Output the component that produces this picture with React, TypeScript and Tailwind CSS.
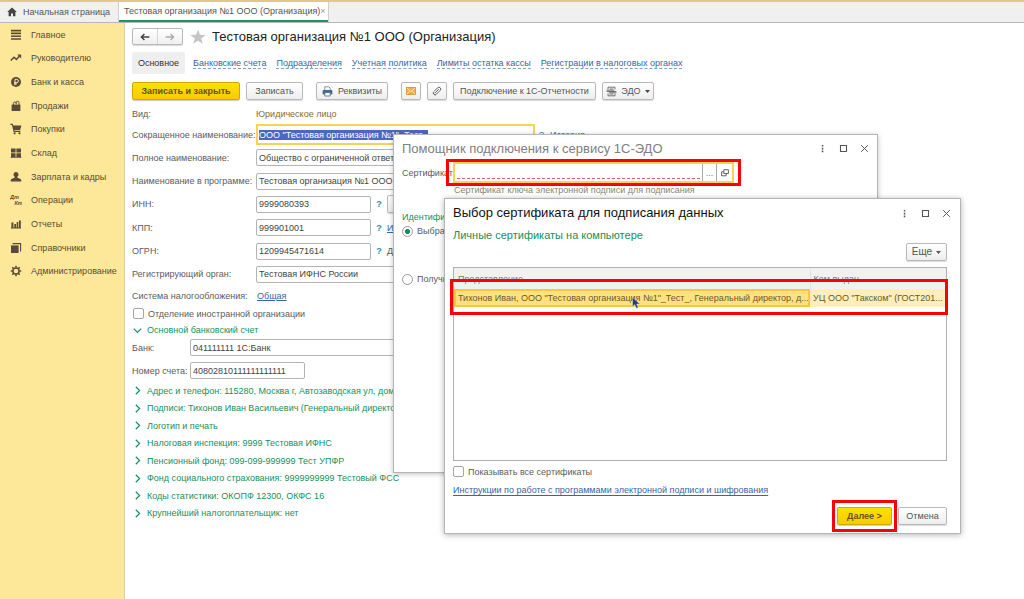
import React, { useEffect, useRef } from "react";

const menu = [
  ["Главное", "main"],
  ["Руководителю", "trend"],
  ["Банк и касса", "ruble"],
  ["Продажи", "bag"],
  ["Покупки", "cart"],
  ["Склад", "store"],
  ["Зарплата и кадры", "person"],
  ["Операции", "dtkt"],
  ["Отчеты", "bars"],
  ["Справочники", "books"],
  ["Администрирование", "gear"],
];

const tabs = [
  "Банковские счета",
  "Подразделения",
  "Учетная политика",
  "Лимиты остатка кассы",
  "Регистрации в налоговых органах",
];

const sections = [
  "Адрес и телефон: 115280, Москва г, Автозаводская ул, дом",
  "Подписи: Тихонов Иван Васильевич (Генеральный директор)",
  "Логотип и печать",
  "Налоговая инспекция: 9999 Тестовая ИФНС",
  "Пенсионный фонд: 099-099-999999 Тест УПФР",
  "Фонд социального страхования: 9999999999 Тестовый ФСС",
  "Коды статистики: ОКОПФ 12300, ОКФС 16",
  "Крупнейший налогоплательщик: нет",
];

const buttonLook =
  "flex h-[18px] items-center justify-center rounded-[2px] border border-[#b9b9b9] bg-linear-to-b from-white to-[#eeeeee] text-[#555] shadow-[0_1px_1px_rgba(0,0,0,0.15)]";
const yellowLook =
  "flex h-[18px] items-center justify-center rounded-[2px] border border-[#d0a800] bg-linear-to-b from-[#ffe000] to-[#f7cb00] font-bold text-[#65541a] shadow-[0_1px_1px_rgba(0,0,0,0.2)]";
const inputLook =
  "h-[17px] rounded-[2px] border border-[#b4b4b4] bg-white px-[2px] text-[#444] outline-none";

function MenuIcon({ name }: { name: string }) {
  const c = "#5b4a3c";
  return (
    <svg viewBox="0 0 12 12" className="size-3 shrink-0" fill={c} stroke="none" aria-hidden="true">
      {name === "main" && <path d="M1 .8h10v1.6H1zM1 3.6h10v1.6H1zM1 6.4h10V8H1zM1 9.2h10v1.6H1z" />}
      {name === "trend" && (
        <>
          <path d="M.8 8.6 4 5.2 6.4 7.4 10 3.6" fill="none" stroke={c} strokeWidth="1.5" />
          <path d="M7.2 2.4h4v4z" />
        </>
      )}
      {name === "ruble" && (
        <>
          <circle cx="6" cy="6" r="5" />
          <path d="M5 9.2V3.4h1.8a1.5 1.5 0 0 1 0 3.2H4M4 7.9h3" fill="none" stroke="#fde799" strokeWidth="1" />
        </>
      )}
      {name === "bag" && (
        <>
          <path d="M1.6 4.6h8.8V11H1.6z" />
          <path d="M3.4 6V3.4M6.2 4.4V2.6a1.4 1.4 0 0 1 2.8 0V6M3.4 3.4a1.4 1.4 0 0 1 2.8 0" fill="none" stroke={c} strokeWidth="1" />
        </>
      )}
      {name === "cart" && (
        <>
          <path d="M2.6 2.6H11.4L10.2 7H3.8z" />
          <path d="M.4 1.4h2L4 8.4h6.4" fill="none" stroke={c} strokeWidth="1.1" />
          <circle cx="4.6" cy="10.3" r="1.1" />
          <circle cx="9.4" cy="10.3" r="1.1" />
        </>
      )}
      {name === "store" && <path d="M1 1.6h4.6v3.9H1zM6.4 1.6H11v3.9H6.4zM1 6.3h4.6v3.6H1zM6.4 6.3H11v3.6H6.4zM.6 10.2h10.8v.8H.6z" />}
      {name === "person" && <path d="M6 1a2.4 2.6 0 0 1 1.4 4.8v.9l3.2 1.2q.8.5.8 2.6H.6q0-2.1.8-2.6l3.2-1.2v-.9A2.4 2.6 0 0 1 6 1z" />}
      {name === "dtkt" && (
        <g fontFamily="Liberation Sans, sans-serif" fontSize="5.5" fontWeight="700" fontStyle="italic">
          <text x="0" y="5">Дт</text>
          <text x="4.4" y="11">Кт</text>
        </g>
      )}
      {name === "bars" && <path d="M1.4 4.4h2v5h-2zM4.3 6h1.8v3.4H4.3zM6.7 4h1.6v5.4H6.7zM9 2.4h1.8v7H9zM1 9.6h10v1H1z" />}
      {name === "books" && (
        <>
          <path d="M1 3.4h7.6V11H1z" />
          <path d="M2.6 1.6h8v8" fill="none" stroke={c} strokeWidth="1.1" />
        </>
      )}
      {name === "gear" && (
        <>
          <circle cx="6" cy="6" r="3.1" fill="none" stroke={c} strokeWidth="1.5" />
          <path
            d="M6 .8v2M6 9.2v2M.8 6h2M9.2 6h2M2.3 2.3l1.4 1.4M8.3 8.3l1.4 1.4M2.3 9.7l1.4-1.4M8.3 3.7l1.4-1.4"
            stroke={c}
            strokeWidth="1.5"
          />
        </>
      )}
    </svg>
  );
}

function WindowControls() {
  return (
    <div className="flex items-center gap-3 text-[#555]">
      <button type="button" aria-label="Меню окна" className="grid size-[9px] place-items-center">
        <svg viewBox="0 0 9 9" className="size-[9px]" fill="currentColor">
          <path d="M3.8 1h1.5v1.6H3.8zM3.8 3.8h1.5v1.6H3.8zM3.8 6.6h1.5v1.6H3.8z" />
        </svg>
      </button>
      <button type="button" aria-label="Развернуть" className="grid size-[9px] place-items-center">
        <svg viewBox="0 0 9 9" className="size-[9px]" fill="none" stroke="currentColor">
          <path d="M1.5 1.5h6v6h-6z" strokeWidth="1.1" />
        </svg>
      </button>
      <button type="button" aria-label="Закрыть" className="grid size-[9px] place-items-center">
        <svg viewBox="0 0 9 9" className="size-[9px]" fill="none" stroke="currentColor">
          <path d="M1.2 1.2l6.6 6.6M7.8 1.2 1.2 7.8" strokeWidth="1" />
        </svg>
      </button>
    </div>
  );
}

function Chevron({ open = false }: { open?: boolean }) {
  return (
    <svg viewBox="0 0 9 9" className="size-[9px] shrink-0" fill="none" stroke="#16905a" strokeWidth="1.2" aria-hidden="true">
      <path d={open ? "M.8 2.6 4.5 6.4 8.2 2.6" : "M2.8.8 6.6 4.5 2.8 8.2"} />
    </svg>
  );
}

function Row({ id, label, children }: { id: string; label: string; children: React.ReactNode }) {
  return (
    <div className="flex items-center">
      <label htmlFor={id} className="w-[124px] shrink-0 whitespace-nowrap">
        {label}
      </label>
      {children}
    </div>
  );
}

function TopTabs() {
  return (
    <nav className="flex h-[23px] shrink-0 border-t-2 border-b border-t-[#dfc88c] border-b-[#b8b8b8] bg-[#f1f0f1] text-[#555]">
      <button type="button" className="flex w-[119px] items-center gap-[6px] border-r border-[#cfcfcf] pl-[7px] whitespace-nowrap">
        <svg viewBox="0 0 10 10" className="size-[10px]" fill="#444" aria-hidden="true">
          <path d="M5 .6 9.8 5H8.4v4.2H6V6.4H4v2.8H1.6V5H.2z" />
        </svg>
        Начальная страница
      </button>
      <button type="button" className="flex w-[209px] items-center justify-between border-b-2 border-[#1d9463] bg-white pr-1 pl-[5px] whitespace-nowrap">
        Тестовая организация №1 ООО (Организация)
        <span className="text-[#999]">×</span>
      </button>
      <div className="border-l border-[#cfcfcf]" />
    </nav>
  );
}

function Sidebar() {
  return (
    <aside className="w-[125px] shrink-0 border-r border-[#d8cda8] bg-[#fde799] text-[#5a4c36]">
      <nav className="grid h-[260px] auto-rows-fr">
        {menu.map(([label, icon]) => (
          <a key={label} href="#" className="flex items-center gap-[9px] pl-[10px] whitespace-nowrap">
            <MenuIcon name={icon} />
            {label}
          </a>
        ))}
      </nav>
    </aside>
  );
}

function Toolbar() {
  return (
    <div className="mt-2 flex items-center whitespace-nowrap">
      <button type="button" className={`${yellowLook} w-[108px]`}>Записать и закрыть</button>
      <button type="button" className={`${buttonLook} ml-[6px] w-[57px]`}>Записать</button>
      <button type="button" className={`${buttonLook} ml-[13px] w-[72px] gap-[5px]`}>
        <svg viewBox="0 0 11 11" className="size-[11px]" aria-hidden="true">
          <path d="M2.8.8h4l1.4 1.4V5H2.8z" fill="#fff" stroke="#5a7896" strokeWidth=".8" />
          <rect x=".6" y="4" width="9.8" height="4.4" rx="1" fill="#426a90" />
          <path d="M2.8 6.6h5.4V10H2.8z" fill="#fff" stroke="#426a90" strokeWidth=".8" />
        </svg>
        Реквизиты
      </button>
      <button type="button" aria-label="Письмо" className={`${buttonLook} ml-[13px] w-[20px]`}>
        <svg viewBox="0 0 10 8" className="h-2 w-[10px]">
          <rect x=".5" y=".5" width="9" height="7" fill="#f5ae47" stroke="#dc8c27" strokeWidth=".8" />
          <path d="M.8.9 5 4.6 9.2.9M.8 7.2l3-3.2M9.2 7.2l-3-3.2" fill="none" stroke="#fff0cf" strokeWidth=".8" />
        </svg>
      </button>
      <button type="button" aria-label="Файлы" className={`${buttonLook} ml-[6px] w-[20px]`}>
        <svg viewBox="0 0 10 10" className="size-[10px]" fill="none" stroke="#666" strokeWidth="1">
          <path d="M3.2 6.8 6.8 3.2M2 5.4 5.600 1.8a1.8 1.8 0 0 1 2.6 2.6L4.4 8.2a1.4 1.4 0 0 1-2.4-2M3.8 8.8a2 2 0 0 1-2.4-2.6" />
        </svg>
      </button>
      <button type="button" className={`${buttonLook} ml-[6px] w-[143px]`}>Подключение к 1С-Отчетности</button>
      <button type="button" className={`${buttonLook} ml-[6px] w-[52px] gap-1`}>
        <svg viewBox="0 0 11 11" className="size-[11px]" fill="none" stroke="#666" strokeWidth=".9" aria-hidden="true">
          <path d="M2 3.400V1.200h7v2.200M2 7.600v2.200h7V7.600M3.600 3h3.800M3.600 8h3.800M.6 5.500h8M10.400 5.500h-8M.6 4.200h7.600M2.800 6.800h7.600" />
        </svg>
        ЭДО
        <svg viewBox="0 0 5 3" className="h-[3px] w-[5px]" fill="#444" aria-hidden="true"><path d="M0 0h5L2.5 3z" /></svg>
      </button>
    </div>
  );
}

function OrganizationForm() {
  const shortName = useRef<HTMLInputElement>(null);
  useEffect(() => {
    shortName.current?.focus();
    shortName.current?.select();
  }, []);

  return (
    <main className="min-w-0 flex-1 overflow-hidden pl-[7px]">
      <header className="mt-1 flex h-[19px] items-center">
        <div className="flex h-[17px] w-[51px] rounded-[2px] border border-[#b9b9b9] bg-linear-to-b from-white to-[#f0f0f0] shadow-[0_1px_1px_rgba(0,0,0,0.15)]">
          <button type="button" aria-label="Назад" className="grid flex-1 place-items-center border-r border-[#d5d5d5]">
            <svg viewBox="0 0 10 8" className="h-2 w-[10px]" fill="none" stroke="#444" strokeWidth="1.5"><path d="M9.4 4H1.4M4.4 1 1.4 4l3 3" /></svg>
          </button>
          <button type="button" aria-label="Вперед" className="grid flex-1 place-items-center">
            <svg viewBox="0 0 10 8" className="h-2 w-[10px]" fill="none" stroke="#aaa" strokeWidth="1.3"><path d="M.6 4h8M5.6 1l3 3-3 3" /></svg>
          </button>
        </div>
        <svg viewBox="0 0 16 16" className="ml-[7px] size-4" fill="#c5c5c5" aria-hidden="true">
          <path d="M8 .6l2 5.1 5.6.3-4.4 3.4 1.6 5.4L8 11.8l-4.8 3 1.6-5.4L.4 6 6 5.7z" />
        </svg>
        <h1 className="ml-[6px] text-[13px] whitespace-nowrap text-[#222]">Тестовая организация №1 ООО (Организация)</h1>
      </header>

      <nav className="mt-[6px] flex h-[22px] items-center gap-2 whitespace-nowrap">
        <a href="#" className="flex h-full w-[53px] items-center justify-center rounded-[2px] bg-[#efefef] text-[#333]">Основное</a>
        <div className="flex gap-[10px]">
          {tabs.map((tab) => (
            <a key={tab} href="#" className="border-b border-dashed border-[#7ba0cf] leading-[10px] text-[#3566a8]">{tab}</a>
          ))}
        </div>
      </nav>

      <Toolbar />

      <div className="mt-1 flex h-[19px] items-center">
        <span className="w-[124px]">Вид:</span>
        <span className="text-[#8a6a30]">Юридическое лицо</span>
      </div>
      <div className="grid h-[163px] auto-rows-fr">
        <Row id="short-name" label="Сокращенное наименование:">
          <input
            id="short-name"
            ref={shortName}
            defaultValue={'ООО "Тестовая организация №1"_Тест_'}
            className="h-[21px] w-[279px] border-2 border-[#f8d254] bg-white px-px outline-none selection:bg-[#4e66c2] selection:text-white"
          />
          <span className="ml-1 text-[#2b7cb4]">?</span>
          <a href="#" className="ml-[6px] text-[#3566a8] underline">История</a>
        </Row>
        <Row id="full-name" label="Полное наименование:">
          <input id="full-name" defaultValue="Общество с ограниченной ответственностью" className={`${inputLook} w-[279px]`} />
        </Row>
        <Row id="program-name" label="Наименование в программе:">
          <input id="program-name" defaultValue="Тестовая организация №1 ООО" className={`${inputLook} w-[279px]`} />
        </Row>
        <Row id="inn" label="ИНН:">
          <input id="inn" defaultValue="9999080393" className={`${inputLook} w-[115px]`} />
          <span className="w-4 text-center font-bold text-[#2b8cb4]">?</span>
          <button type="button" aria-label="Заполнить" className={`${buttonLook} w-[60px]`} />
        </Row>
        <Row id="kpp" label="КПП:">
          <input id="kpp" defaultValue="999901001" className={`${inputLook} w-[115px]`} />
          <span className="w-4 text-center font-bold text-[#2b8cb4]">?</span>
          <a href="#" className="text-[#3566a8] underline">История</a>
        </Row>
        <Row id="ogrn" label="ОГРН:">
          <input id="ogrn" defaultValue="1209945471614" className={`${inputLook} w-[115px]`} />
          <span className="w-4 text-center font-bold text-[#2b8cb4]">?</span>
          <span>Дата</span>
        </Row>
        <Row id="authority" label="Регистрирующий орган:">
          <input id="authority" defaultValue="Тестовая ИФНС России" className={`${inputLook} w-[279px]`} />
        </Row>
      </div>
      <div className="flex h-[19px] items-center">
        <span className="w-[125px]">Система налогообложения:</span>
        <a href="#" className="text-[#3566a8] underline">Общая</a>
      </div>
      <label className="flex h-[17px] items-center gap-1 pl-px">
        <input type="checkbox" className="size-[11px] appearance-none rounded-[2px] border border-[#a5a5a5] bg-white" />
        Отделение иностранной организации
      </label>
      <button type="button" className="flex h-4 items-center gap-[5px] pl-px text-[#16905a]">
        <Chevron open />
        Основной банковский счет
      </button>
      <div className="flex h-[19px] items-center">
        <label htmlFor="bank" className="w-[58px]">Банк:</label>
        <input id="bank" defaultValue="041111111 1С:Банк" className={`${inputLook} w-[345px]`} />
      </div>
      <div className="mt-1 flex h-[19px] items-center">
        <label htmlFor="account" className="w-[58px] whitespace-nowrap">Номер счета:</label>
        <input id="account" defaultValue="40802810111111111111" className={`${inputLook} w-[115px]`} />
      </div>
      <div className="mt-[2px] grid h-[140px] auto-rows-fr pl-px">
        {sections.map((section) => (
          <button key={section} type="button" className="flex items-center gap-[5px] whitespace-nowrap text-[#16905a]">
            <Chevron />
            {section}
          </button>
        ))}
      </div>
    </main>
  );
}

function EdoAssistant() {
  return (
    <section className="absolute top-[134px] left-[393px] h-[339px] w-[485px] border border-[#b5b5b5] bg-white px-2 shadow-[0_1px_5px_rgba(0,0,0,0.25)]">
      <header className="flex h-[27px] items-center justify-between">
        <h2 className="text-[13px] text-[#808080]">Помощник подключения к сервису 1С-ЭДО</h2>
        <WindowControls />
      </header>
      <div className="flex h-[21px] items-center">
        <label htmlFor="certificate" className="w-[51px] whitespace-nowrap">Сертификат:</label>
        <div className="relative flex h-[21px] w-[281px] border-2 border-[#f8d254] bg-white">
          <div className="flex flex-1 border-r border-[#aaa] px-[2px] pb-[2px]">
            <input id="certificate" className="w-full border-b border-dashed border-[#d06070] outline-none" />
          </div>
          <button type="button" aria-label="Выбрать" className="w-[14px] border-r border-[#aaa] text-[#777]">...</button>
          <button type="button" aria-label="Открыть" className="grid w-[15px] place-items-center">
            <svg viewBox="0 0 8 8" className="size-2" fill="none" stroke="#555" strokeWidth=".9"><path d="M2.8.7h4.6v3.8H2.8zM2.600 2.800H.6v4h4.600V4.800" /></svg>
          </button>
          <div className="pointer-events-none absolute -inset-x-[9px] -inset-y-[5px] border-3 border-[#fb0007]" />
        </div>
      </div>
      <p className="mt-[2px] pl-[52px] leading-[11px] text-[#8b8375]">Сертификат ключа электронной подписи для подписания</p>
      <fieldset className="mt-[15px]">
        <legend className="h-3 text-[#16905a]">Идентификация</legend>
        <label className="flex h-4 items-center gap-[4px]">
          <input type="radio" name="identifier" defaultChecked className="size-[11px] appearance-none rounded-full border border-[#999] bg-radial from-[#16905a] from-35% to-white to-40%" />
          Выбрать
        </label>
        <label className="mt-8 flex h-4 items-center gap-[4px]">
          <input type="radio" name="identifier" className="size-[11px] appearance-none rounded-full border border-[#999] bg-white" />
          Получить
        </label>
      </fieldset>
    </section>
  );
}

function CertificateDialog() {
  return (
    <section role="dialog" aria-label="Выбор сертификата для подписания данных" className="absolute top-[198px] left-[444px] w-[517px] border border-[#b5b5b5] bg-white pr-[13px] pb-2 pl-2 shadow-[0_1px_6px_rgba(0,0,0,0.3)]">
      <header className="-mr-1 flex h-7 items-center justify-between">
        <h2 className="text-[13px] text-[#111]">Выбор сертификата для подписания данных</h2>
        <WindowControls />
      </header>
      <h3 className="h-4 text-[11px] leading-4 text-[#16905a]">Личные сертификаты на компьютере</h3>
      <div className="flex justify-end">
        <button type="button" className={`${buttonLook} w-[41px] gap-1 text-[10px]`}>
          Еще
          <svg viewBox="0 0 5 3" className="h-[3px] w-[5px]" fill="#555" aria-hidden="true"><path d="M0 0h5L2.5 3z" /></svg>
        </button>
      </div>
      <div className="relative mt-[6px] h-[194px] border border-[#b0b0b0]">
        <table className="w-full table-fixed border-collapse text-left whitespace-nowrap">
          <thead>
            <tr className="h-[21px] bg-[#f1f1f1] text-[#777]">
              <th className="w-[356px] border-r border-[#e2e2e2] pl-1 font-normal">Представление</th>
              <th className="pl-[3px] font-normal">Кем выдан</th>
            </tr>
          </thead>
          <tbody>
            <tr className="h-[18px] text-[#6b5a2c]">
              <td className="bg-[#ffe181] pl-1 outline-2 -outline-offset-2 outline-[#f5c842]">
                Тихонов Иван, ООО "Тестовая организация №1"_Тест_, Генеральный директор, д...
              </td>
              <td className="bg-[#fdeebb] pl-[3px]">УЦ ООО "Такском" (ГОСТ201...</td>
            </tr>
          </tbody>
        </table>
        <div className="pointer-events-none absolute top-[11px] -right-[2px] -left-1 h-9 border-3 border-[#fb0007]" />
        <svg viewBox="0 0 9 12" className="absolute top-[29px] left-[178px] h-3 w-[9px]" aria-hidden="true">
          <path d="M.6.6v9l2.2-2 1.6 3.6 1.8-.8-1.600-3.500h3.200z" fill="#1d3f7c" stroke="#dfe6f2" strokeWidth=".4" />
        </svg>
      </div>
      <label className="mt-[3px] flex h-[15px] items-center gap-1">
        <input type="checkbox" className="size-[11px] appearance-none rounded-[2px] border border-[#a5a5a5] bg-white" />
        Показывать все сертификаты
      </label>
      <a href="#" className="mt-1 block h-[14px] w-max leading-[14px] text-[#3566a8] underline underline-offset-2">
        Инструкции по работе с программами электронной подписи и шифрования
      </a>
      <footer className="mt-[10px] flex justify-end gap-[6px]">
        <div className="relative">
          <button type="button" className={`${yellowLook} w-[55px]`}>Далее &gt;</button>
          <div className="pointer-events-none absolute -inset-x-[5px] -inset-y-[7px] border-3 border-[#fb0007]" />
        </div>
        <button type="button" className={`${buttonLook} w-[49px]`}>Отмена</button>
      </footer>
    </section>
  );
}

export default function App() {
  return (
    <div className="relative flex min-h-screen flex-col overflow-hidden bg-white font-['Liberation_Sans',Arial,sans-serif] text-[9px] leading-[12px] text-[#5c5c5c]">
      <TopTabs />
      <div className="flex flex-1">
        <Sidebar />
        <OrganizationForm />
      </div>
      <EdoAssistant />
      <CertificateDialog />
    </div>
  );
}
